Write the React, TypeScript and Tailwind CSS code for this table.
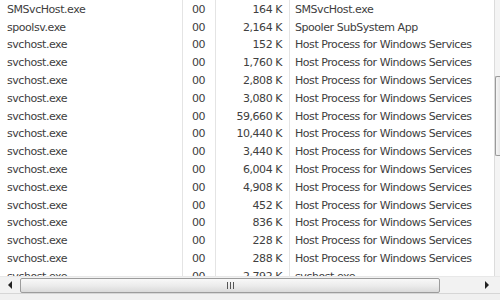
import React from 'react';

interface Proc {
  name: string;
  cpu: string;
  mem: string;
  desc: string;
}

const rows: Proc[] = [
  { name: 'SMSvcHost.exe', cpu: '00', mem: '164 K', desc: 'SMSvcHost.exe' },
  { name: 'spoolsv.exe', cpu: '00', mem: '2,164 K', desc: 'Spooler SubSystem App' },
  { name: 'svchost.exe', cpu: '00', mem: '152 K', desc: 'Host Process for Windows Services' },
  { name: 'svchost.exe', cpu: '00', mem: '1,760 K', desc: 'Host Process for Windows Services' },
  { name: 'svchost.exe', cpu: '00', mem: '2,808 K', desc: 'Host Process for Windows Services' },
  { name: 'svchost.exe', cpu: '00', mem: '3,080 K', desc: 'Host Process for Windows Services' },
  { name: 'svchost.exe', cpu: '00', mem: '59,660 K', desc: 'Host Process for Windows Services' },
  { name: 'svchost.exe', cpu: '00', mem: '10,440 K', desc: 'Host Process for Windows Services' },
  { name: 'svchost.exe', cpu: '00', mem: '3,440 K', desc: 'Host Process for Windows Services' },
  { name: 'svchost.exe', cpu: '00', mem: '6,004 K', desc: 'Host Process for Windows Services' },
  { name: 'svchost.exe', cpu: '00', mem: '4,908 K', desc: 'Host Process for Windows Services' },
  { name: 'svchost.exe', cpu: '00', mem: '452 K', desc: 'Host Process for Windows Services' },
  { name: 'svchost.exe', cpu: '00', mem: '836 K', desc: 'Host Process for Windows Services' },
  { name: 'svchost.exe', cpu: '00', mem: '228 K', desc: 'Host Process for Windows Services' },
  { name: 'svchost.exe', cpu: '00', mem: '288 K', desc: 'Host Process for Windows Services' },
  { name: 'svchost.exe', cpu: '00', mem: '2,792 K', desc: 'svchost.exe' },
];

export default function App() {
  return (
    <div className="flex h-[300px] w-[500px] flex-col overflow-hidden bg-white font-['DejaVu_Sans',sans-serif] text-[11px] tracking-[-0.45px] text-[#404040]">
      <div className="flex h-[276px] overflow-hidden">
        <div className="relative w-[495px] overflow-hidden">
          {/* column dividers */}
          <div className="pointer-events-none absolute inset-y-0 left-[182px] w-px bg-[#e4e4e4]" />
          <div className="pointer-events-none absolute inset-y-0 left-[215px] w-px bg-[#e4e4e4]" />
          <div className="pointer-events-none absolute inset-y-0 left-[289px] w-px bg-[#e4e4e4]" />
          <div className="pointer-events-none absolute inset-y-0 right-0 w-px bg-[#dcdcdc]" />
          {rows.map((r, i) => (
            <div key={i} className="flex h-[17.8px] items-center whitespace-nowrap pt-px leading-none">
              <div className="w-[182px] pl-[7px]">{r.name}</div>
              <div className="w-[33px] pl-[10px]">{r.cpu}</div>
              <div className="w-[74px] pr-[7px] text-right">{r.mem}</div>
              <div className="pl-[6px]">{r.desc}</div>
            </div>
          ))}
        </div>
        {/* vertical scrollbar (cut off) */}
        <div className="flex w-[5px] flex-col bg-[#f4f4f4]">
          <div className="mt-[76px] h-[80px] rounded-l-[2px] border border-r-0 border-[#9a9a9a] bg-gradient-to-r from-[#f6f6f6] to-[#e6e6e6]" />
        </div>
      </div>
      {/* horizontal scrollbar */}
      <div className="flex h-[17px] items-center border-t border-[#e8e8e8] bg-[#f2f2f2]">
        <div className="flex w-[20px] items-center justify-center">
          <div className="h-0 w-0 border-y-[4px] border-r-[4px] border-y-transparent border-r-[#222]" />
        </div>
        <div className="flex h-[15px] w-[420px] items-center justify-center rounded-[2px] border border-[#9c9c9c] bg-gradient-to-b from-[#f8f8f8] via-[#ececec] to-[#dadada]">
          <div className="flex gap-[2px]">
            <div className="h-[7px] w-px bg-[#555]" />
            <div className="h-[7px] w-px bg-[#555]" />
            <div className="h-[7px] w-px bg-[#555]" />
          </div>
        </div>
        <div className="flex-1" />
        <div className="flex w-[26px] items-center justify-center">
          <div className="h-0 w-0 border-y-[4px] border-l-[4px] border-y-transparent border-l-[#222]" />
        </div>
      </div>
      <div className="flex-1 border-t border-[#d6d6d6] bg-[#f0f0f0]" />
    </div>
  );
}
